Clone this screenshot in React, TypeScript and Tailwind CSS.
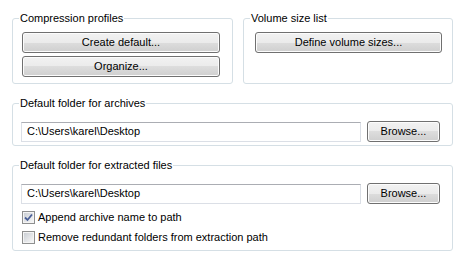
import React from "react";

const font = { fontFamily: '"Liberation Sans", Arial, sans-serif' };

const Button = ({ label, className = "" }: { label: string; className?: string }) => (
  <button
    className={`h-[21px] rounded-[3px] border border-[#707070] bg-[linear-gradient(#f2f2f2_0%,#ebebeb_50%,#dddddd_50%,#cfcfcf_100%)] text-[11px] leading-none text-black shadow-[inset_0_0_0_1px_#fcfcfc] ${className}`}
  >
    {label}
  </button>
);

const PathInput = ({ value }: { value: string }) => (
  <div className="flex h-[20px] flex-1 items-center border border-[#dbdfe6] border-t-[#abadb3] bg-white pl-[5px] text-[11px] text-black">
    {value}
  </div>
);

const Group = ({
  title,
  className = "",
  children,
}: {
  title: string;
  className?: string;
  children: React.ReactNode;
}) => (
  <fieldset className={`rounded-[3px] border border-[#d5dfe5] p-0 ${className}`}>
    <legend className="ml-[6px] px-[1px] text-[11px] leading-[13px] text-black">{title}</legend>
    {children}
  </fieldset>
);

const Checkbox = ({ checked, label }: { checked?: boolean; label: string }) => (
  <label className="flex h-[13px] items-center gap-[3px] text-[11px] text-black">
    <span className="flex h-[13px] w-[13px] items-center justify-center border border-[#8e8f8f] bg-white">
      <span className="flex h-[11px] w-[11px] items-center justify-center border border-[#f4f4f4] bg-[linear-gradient(135deg,#cbcfd5,#f6f6f6)]">
        {checked && (
          <svg width="9" height="9" viewBox="0 0 9 9">
            <path d="M1 4.5 L3.5 7 L8 1.5" fill="none" stroke="#4a5f97" strokeWidth="1.8" />
          </svg>
        )}
      </span>
    </span>
    {label}
  </label>
);

export default function App() {
  return (
    <div className="h-[261px] w-[464px] bg-white pl-[12px] pt-[12px]" style={font}>
      <div className="flex gap-[10px]">
        <Group title="Compression profiles" className="h-[72px] w-[221px]">
          <div className="flex flex-col gap-[3px] pl-[9px] pr-[12px] pt-[7px]">
            <Button label="Create default..." />
            <Button label="Organize..." />
          </div>
        </Group>
        <Group title="Volume size list" className="h-[72px] w-[210px]">
          <div className="flex flex-col pl-[11px] pr-[10px] pt-[7px]">
            <Button label="Define volume sizes..." />
          </div>
        </Group>
      </div>

      <Group title="Default folder for archives" className="mt-[13px] h-[49px] w-[441px]">
        <div className="flex items-center gap-[6px] pl-[8px] pr-[12px] pt-[11px]">
          <PathInput value="C:\Users\karel\Desktop" />
          <Button label="Browse..." className="w-[73px]" />
        </div>
      </Group>

      <Group title="Default folder for extracted files" className="mt-[13px] h-[92px] w-[441px]">
        <div className="flex items-center gap-[6px] pl-[8px] pr-[12px] pt-[11px]">
          <PathInput value="C:\Users\karel\Desktop" />
          <Button label="Browse..." className="w-[73px]" />
        </div>
        <div className="mt-[7px] flex flex-col gap-[7px] pl-[9px]">
          <Checkbox checked label="Append archive name to path" />
          <Checkbox label="Remove redundant folders from extraction path" />
        </div>
      </Group>
    </div>
  );
}
